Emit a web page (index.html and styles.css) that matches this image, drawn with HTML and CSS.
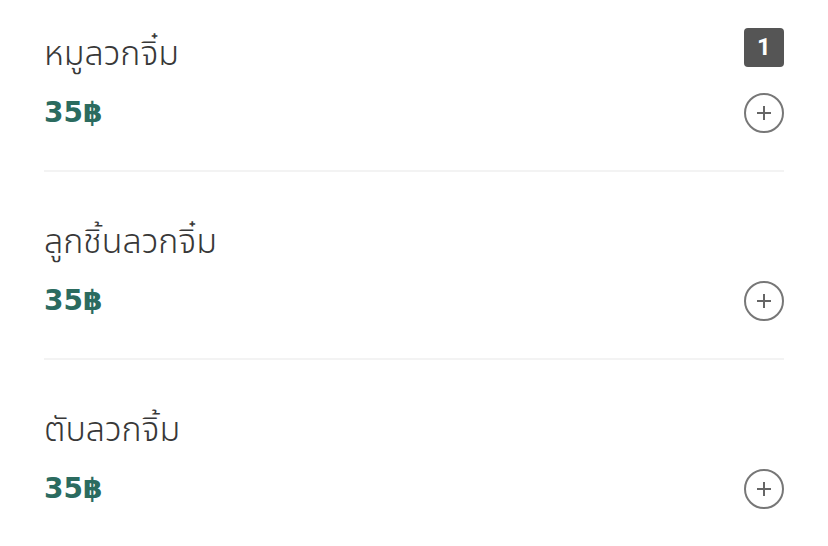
FILE: index.html
```html
<!DOCTYPE html>
<html lang="th">
<head>
<meta charset="utf-8">
<link rel="stylesheet" href="styles.css">
</head>
<body>
<div class="list">
  <div class="item">
    <div class="row">
      <span class="name">หมูลวกจิ๋ม</span>
      <span class="badge">1</span>
    </div>
    <div class="row">
      <span class="price">35฿</span>
      <span class="add"><svg width="40" height="40" viewBox="0 0 40 40"><circle cx="20" cy="20" r="19" fill="none" stroke="#777" stroke-width="2"/><path d="M20 13v14M13 20h14" stroke="#666" stroke-width="2" fill="none"/></svg></span>
    </div>
  </div>
  <div class="item">
    <div class="row">
      <span class="name">ลูกชิ้นลวกจิ๋ม</span>
    </div>
    <div class="row">
      <span class="price">35฿</span>
      <span class="add"><svg width="40" height="40" viewBox="0 0 40 40"><circle cx="20" cy="20" r="19" fill="none" stroke="#777" stroke-width="2"/><path d="M20 13v14M13 20h14" stroke="#666" stroke-width="2" fill="none"/></svg></span>
    </div>
  </div>
  <div class="item">
    <div class="row">
      <span class="name">ตับลวกจิ้ม</span>
    </div>
    <div class="row">
      <span class="price">35฿</span>
      <span class="add"><svg width="40" height="40" viewBox="0 0 40 40"><circle cx="20" cy="20" r="19" fill="none" stroke="#777" stroke-width="2"/><path d="M20 13v14M13 20h14" stroke="#666" stroke-width="2" fill="none"/></svg></span>
    </div>
  </div>
</div>
</body>
</html>
```
FILE: styles.css
```css
html, body {
  margin: 0;
  padding: 0;
  background: #fff;
}
body {
  font-family: "Noto Sans Thai", "Noto Sans", "DejaVu Sans", sans-serif;
  overflow: hidden;
}
.list {
  margin: -16px 44px 0 44px;
}
.item {
  display: flex;
  flex-direction: column;
  gap: 23px;
  padding: 46px 0 37px 0;
  border-bottom: 2px solid #f3f3f3;
}
.row {
  display: flex;
  justify-content: space-between;
  align-items: center;
  height: 40px;
}
.name {
  font-size: 34px;
  font-weight: 300;
  color: #383838;
  line-height: 40px;
  padding-top: 10px;
}
.price {
  font-family: "DejaVu Sans", "Noto Sans Thai", sans-serif;
  font-size: 28px;
  font-weight: 700;
  color: #2b6b5f;
  line-height: 40px;
}
.badge {
  width: 40px;
  height: 39px;
  border-radius: 4px;
  background: #555;
  color: #fff;
  font-family: Roboto, sans-serif;
  font-size: 24px;
  font-weight: 700;
  display: flex;
  align-items: center;
  justify-content: center;
  margin-top: -6px;
}
.add {
  width: 40px;
  height: 40px;
  display: block;
}
.add svg {
  display: block;
}
```
